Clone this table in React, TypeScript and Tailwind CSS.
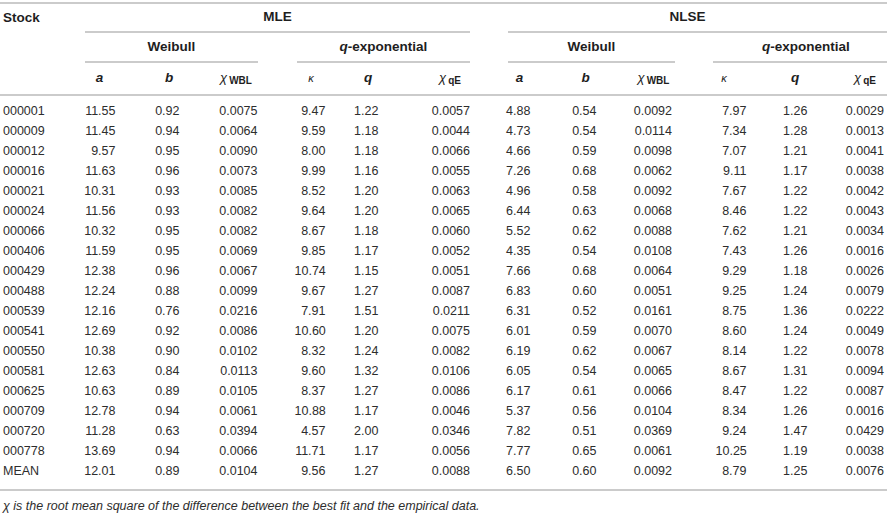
import React from "react";

const rows: string[][] = [
  ["000001", "11.55", "0.92", "0.0075", "9.47", "1.22", "0.0057", "4.88", "0.54", "0.0092", "7.97", "1.26", "0.0029"],
  ["000009", "11.45", "0.94", "0.0064", "9.59", "1.18", "0.0044", "4.73", "0.54", "0.0114", "7.34", "1.28", "0.0013"],
  ["000012", "9.57", "0.95", "0.0090", "8.00", "1.18", "0.0066", "4.66", "0.59", "0.0098", "7.07", "1.21", "0.0041"],
  ["000016", "11.63", "0.96", "0.0073", "9.99", "1.16", "0.0055", "7.26", "0.68", "0.0062", "9.11", "1.17", "0.0038"],
  ["000021", "10.31", "0.93", "0.0085", "8.52", "1.20", "0.0063", "4.96", "0.58", "0.0092", "7.67", "1.22", "0.0042"],
  ["000024", "11.56", "0.93", "0.0082", "9.64", "1.20", "0.0065", "6.44", "0.63", "0.0068", "8.46", "1.22", "0.0043"],
  ["000066", "10.32", "0.95", "0.0082", "8.67", "1.18", "0.0060", "5.52", "0.62", "0.0088", "7.62", "1.21", "0.0034"],
  ["000406", "11.59", "0.95", "0.0069", "9.85", "1.17", "0.0052", "4.35", "0.54", "0.0108", "7.43", "1.26", "0.0016"],
  ["000429", "12.38", "0.96", "0.0067", "10.74", "1.15", "0.0051", "7.66", "0.68", "0.0064", "9.29", "1.18", "0.0026"],
  ["000488", "12.24", "0.88", "0.0099", "9.67", "1.27", "0.0087", "6.83", "0.60", "0.0051", "9.25", "1.24", "0.0079"],
  ["000539", "12.16", "0.76", "0.0216", "7.91", "1.51", "0.0211", "6.31", "0.52", "0.0161", "8.75", "1.36", "0.0222"],
  ["000541", "12.69", "0.92", "0.0086", "10.60", "1.20", "0.0075", "6.01", "0.59", "0.0070", "8.60", "1.24", "0.0049"],
  ["000550", "10.38", "0.90", "0.0102", "8.32", "1.24", "0.0082", "6.19", "0.62", "0.0067", "8.14", "1.22", "0.0078"],
  ["000581", "12.63", "0.84", "0.0113", "9.60", "1.32", "0.0106", "6.05", "0.54", "0.0065", "8.67", "1.31", "0.0094"],
  ["000625", "10.63", "0.89", "0.0105", "8.37", "1.27", "0.0086", "6.17", "0.61", "0.0066", "8.47", "1.22", "0.0087"],
  ["000709", "12.78", "0.94", "0.0061", "10.88", "1.17", "0.0046", "5.37", "0.56", "0.0104", "8.34", "1.26", "0.0016"],
  ["000720", "11.28", "0.63", "0.0394", "4.57", "2.00", "0.0346", "7.82", "0.51", "0.0369", "9.24", "1.47", "0.0429"],
  ["000778", "13.69", "0.94", "0.0066", "11.71", "1.17", "0.0056", "7.77", "0.65", "0.0061", "10.25", "1.19", "0.0038"],
  ["MEAN", "12.01", "0.89", "0.0104", "9.56", "1.27", "0.0088", "6.50", "0.60", "0.0092", "8.79", "1.25", "0.0076"],
];

const innerW = [
  "w-[32px]", "w-[27px]", "w-[40px]", "w-[31px]", "w-[24px]", "w-[40px]",
  "w-[24px]", "w-[27px]", "w-[40px]", "w-[31px]", "w-[24px]", "w-[40px]",
];

const GRID =
  "grid grid-cols-[77.5px_44px_22.5px_44px_27.5px_44px_28.5px_44px_12px_44px_40px_44px_24px_44px_21px_44px_25px_44px_35px_44px_20px_44px_25px_44px_1px]";

const line = "border-[#cbcbcb]";

function Chi({ sub }: { sub: string }) {
  return (
    <span className="whitespace-nowrap">
      <span className="italic font-normal text-[13px]">χ</span>
      <span className="font-bold text-[10px] ml-[2px] align-[-2px]">{sub}</span>
    </span>
  );
}

function Kappa() {
  return <span className="italic font-normal text-[11px]">κ</span>;
}

function QExp() {
  return (
    <span>
      <i>q</i>-exponential
    </span>
  );
}

const headCells: { node: React.ReactNode; cls: string }[] = [
  { node: <i>a</i>, cls: "" },
  { node: <i>b</i>, cls: "pl-[6px]" },
  { node: <Chi sub="WBL" />, cls: "pr-[3px]" },
  { node: <Kappa />, cls: "pl-[2px]" },
  { node: <i>q</i>, cls: "pl-[4px]" },
  { node: <Chi sub="qE" />, cls: "" },
  { node: <i>a</i>, cls: "pl-[3px]" },
  { node: <i>b</i>, cls: "pl-[5px]" },
  { node: <Chi sub="WBL" />, cls: "pl-[3px]" },
  { node: <Kappa />, cls: "pr-[14px]" },
  { node: <i>q</i>, cls: "" },
  { node: <Chi sub="qE" />, cls: "pl-[2px]" },
];

export default function App() {
  return (
    <div
      className="w-[887px] h-[514px] bg-white text-[#2d2d2d] overflow-hidden pt-[2px]"
      style={{ fontFamily: '"Liberation Sans", Arial, sans-serif' }}
    >
      <div className={`border-t-2 ${line}`}>
        {/* header row 1 */}
        <div className="flex h-[29px] text-[13.5px] font-bold text-[#1e1e1e]">
          <div className="w-[85px] pl-[3px] flex items-center">Stock</div>
          <div className={`w-[385px] border-b-2 ${line} flex items-center justify-center`}>MLE</div>
          <div className="w-[38px]" />
          <div className={`flex-1 border-b-2 ${line} flex items-center justify-center pr-[20px]`}>NLSE</div>
        </div>
        {/* header row 2 */}
        <div className="flex h-[30px] text-[13.5px] font-bold text-[#1e1e1e]">
          <div className="w-[85px]" />
          <div className={`w-[173px] border-b-2 ${line} flex items-center justify-center`}>Weibull</div>
          <div className="w-[39px]" />
          <div className={`w-[173px] border-b-2 ${line} flex items-center justify-center`}>
            <QExp />
          </div>
          <div className="w-[38px]" />
          <div className={`w-[167px] border-b-2 ${line} flex items-center justify-center`}>Weibull</div>
          <div className="w-[38px]" />
          <div className={`flex-1 border-b-2 ${line} flex items-center justify-center pl-[12px]`}>
            <QExp />
          </div>
        </div>
        {/* header row 3 */}
        <div className={`${GRID} h-[33px] border-b-2 ${line} text-[13.5px] font-bold text-[#1e1e1e]`}>
          <div />
          {headCells.map((c, i) => (
            <React.Fragment key={i}>
              <div className={`flex justify-center items-center ${c.cls}`}>{c.node}</div>
              <div />
            </React.Fragment>
          ))}
        </div>
        {/* data */}
        <div className={`pt-[5px] pb-[8px] border-b-2 ${line} text-[12.5px]`}>
          {rows.map((r) => (
            <div key={r[0]} className={`${GRID} h-[20px] items-center`}>
              <div className="pl-[3px]">{r[0]}</div>
              {r.slice(1).map((v, i) => (
                <React.Fragment key={i}>
                  <div className="flex justify-center">
                    <span className={`${innerW[i]} text-right whitespace-nowrap`}>{v}</span>
                  </div>
                  <div />
                </React.Fragment>
              ))}
            </div>
          ))}
        </div>
        {/* footnote */}
        <div className="pt-[7px] pl-[3px] text-[12.5px] italic leading-[16px] text-[#2d2d2d]">
          χ is the root mean square of the difference between the best fit and the empirical data.
        </div>
      </div>
    </div>
  );
}
